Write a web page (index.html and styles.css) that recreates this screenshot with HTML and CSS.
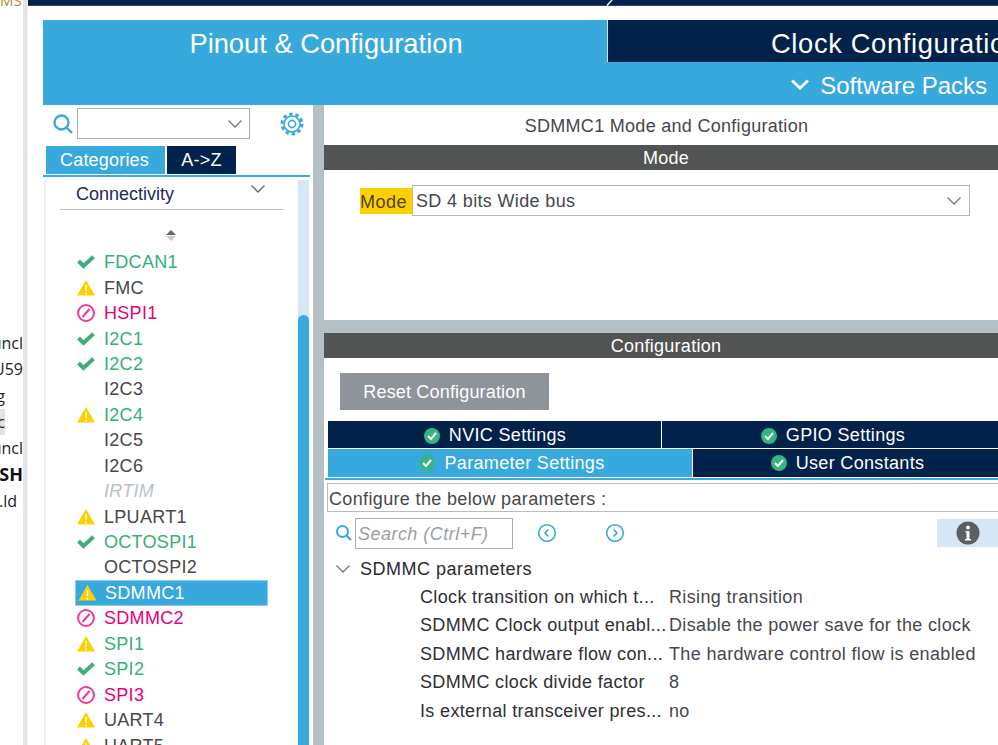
FILE: index.html
```html
<!DOCTYPE html>
<html lang="en">
<head>
<meta charset="utf-8">
<title>Pinout &amp; Configuration</title>
<link rel="stylesheet" href="styles.css">
</head>
<body>
<svg class="defs" width="0" height="0" aria-hidden="true">
  <symbol id="ok" viewBox="0 0 18 14"><path d="M1.500 6 6.500 11 16.500 1.800" fill="none" stroke="#3fae78" stroke-width="3.900"/></symbol>
  <symbol id="warn" viewBox="0 0 18 16"><path d="M9 0 18 15.500H0Z" fill="#ffd000"/><path d="M9 5v6M9 12.400v2" stroke="#fff" stroke-width="1.400"/></symbol>
  <symbol id="ban" viewBox="0 0 18 18"><circle cx="9" cy="9" r="7.900" fill="none" stroke="#ee3a96" stroke-width="2"/><path d="M5.500 13 12.500 5" stroke="#ee3a96" stroke-width="2"/></symbol>
  <symbol id="good" viewBox="0 0 18 18"><circle cx="9" cy="9" r="8" fill="#35b583"/><path d="M5 9l3 3 5-6" fill="none" stroke="#fff" stroke-width="2"/></symbol>
  <symbol id="chev" viewBox="0 0 16 10"><path d="M1.500 1.500 8 8l6.500-6.500" fill="none" stroke="currentColor" stroke-width="1.300"/></symbol>
</svg>
<div class="page">
  <div class="sliver">
    <div class="sl sl-top">MS</div>
    <div class="sl sl-first"><span>Funcl</span></div>
    <div class="sl"><span>U59</span></div>
    <div class="sl sl-g"><span>g</span></div>
    <div class="sl sl-c"><span>c</span></div>
    <div class="sl"><span>Funcl</span></div>
    <div class="sl sl-b"><span>FLASH</span></div>
    <div class="sl sl-ld"><span>.ld</span></div>
  </div>
  <div class="rule"></div>
  <main class="main">
    <div class="topbar"><svg class="topmark" width="7" height="6" viewBox="0 0 7 6"><path d="M6 0 1 5.500" stroke="#fff" stroke-width="1.300"/></svg></div>
    <div class="app">
      <header class="head">
        <div class="head-tabs">
          <div class="htab htab-on">Pinout &amp; Configuration</div>
          <div class="htab htab-off">Clock Configuration</div>
        </div>
        <div class="packs"><svg class="packs-chev" width="20" height="13" viewBox="0 0 20 13"><path d="M2 2.500 10 10l8-7.500" fill="none" stroke="#fff" stroke-width="2.800"/></svg>Software Packs</div>
      </header>
      <div class="work">
        <aside class="left">
          <div class="find">
            <svg class="find-ico" width="22" height="22" viewBox="0 0 22 22"><circle cx="9.500" cy="9.500" r="7" fill="none" stroke="#38a9dc" stroke-width="2.400"/><path d="M14.500 14.500 20 20" stroke="#38a9dc" stroke-width="2.400"/></svg>
            <div class="find-box"><svg class="chev-ico" width="16" height="10"><use href="#chev"/></svg></div>
            <svg class="gear" width="24" height="24" viewBox="0 0 24 24"><g fill="none" stroke="#38a9dc"><circle cx="12" cy="12" r="3.600" stroke-width="1.600"/><circle cx="12" cy="12" r="8" stroke-width="1.600"/><circle cx="12" cy="12" r="10" stroke-width="3" stroke-dasharray="3.400 2.880"/></g></svg>
          </div>
          <div class="ltabs">
            <div class="ltab ltab-on">Categories</div>
            <div class="ltab ltab-off">A-&gt;Z</div>
          </div>
          <div class="blue-line blue-line-l"></div>
          <div class="tree">
            <div class="tree-main">
              <div class="group">Connectivity<svg class="group-chev" width="16" height="10"><use href="#chev"/></svg></div>
              <div class="sort"><i class="sort-up"></i><i class="sort-down"></i></div>
              <ul class="rows">
                <li class="row green"><svg class="ri" width="18" height="14"><use href="#ok"/></svg>FDCAN1</li>
                <li class="row"><svg class="ri" width="18" height="16"><use href="#warn"/></svg>FMC</li>
                <li class="row pink"><svg class="ri" width="18" height="18"><use href="#ban"/></svg>HSPI1</li>
                <li class="row green"><svg class="ri" width="18" height="14"><use href="#ok"/></svg>I2C1</li>
                <li class="row green"><svg class="ri" width="18" height="14"><use href="#ok"/></svg>I2C2</li>
                <li class="row"><span class="ri"></span>I2C3</li>
                <li class="row green"><svg class="ri" width="18" height="16"><use href="#warn"/></svg>I2C4</li>
                <li class="row"><span class="ri"></span>I2C5</li>
                <li class="row"><span class="ri"></span>I2C6</li>
                <li class="row off"><span class="ri"></span>IRTIM</li>
                <li class="row"><svg class="ri" width="18" height="16"><use href="#warn"/></svg>LPUART1</li>
                <li class="row green"><svg class="ri" width="18" height="14"><use href="#ok"/></svg>OCTOSPI1</li>
                <li class="row"><span class="ri"></span>OCTOSPI2</li>
                <li class="row sel"><svg class="ri" width="19" height="16"><use href="#warn"/></svg>SDMMC1</li>
                <li class="row pink"><svg class="ri" width="18" height="18"><use href="#ban"/></svg>SDMMC2</li>
                <li class="row green"><svg class="ri" width="18" height="16"><use href="#warn"/></svg>SPI1</li>
                <li class="row green"><svg class="ri" width="18" height="14"><use href="#ok"/></svg>SPI2</li>
                <li class="row pink"><svg class="ri" width="18" height="18"><use href="#ban"/></svg>SPI3</li>
                <li class="row"><svg class="ri" width="18" height="16"><use href="#warn"/></svg>UART4</li>
                <li class="row"><svg class="ri" width="18" height="16"><use href="#warn"/></svg>UART5</li>
              </ul>
            </div>
            <div class="track"><div class="thumb"></div></div>
          </div>
        </aside>
        <div class="vsplit"></div>
        <section class="right">
          <div class="mode-pane">
            <div class="pane-title">SDMMC1 Mode and Configuration</div>
            <div class="bar">Mode</div>
            <div class="mode-row">
              <div class="mode-label">Mode</div>
              <div class="mode-select">SD 4 bits Wide bus<svg class="chev-ico" width="16" height="10"><use href="#chev"/></svg></div>
            </div>
          </div>
          <div class="hsplit"></div>
          <div class="bar">Configuration</div>
          <div class="reset">Reset Configuration</div>
          <div class="ctabs ctabs-a">
            <div class="ctab"><svg width="18" height="18"><use href="#good"/></svg>NVIC Settings</div>
            <div class="ctab"><svg width="18" height="18"><use href="#good"/></svg>GPIO Settings</div>
          </div>
          <div class="ctabs ctabs-b">
            <div class="ctab ctab-on"><svg width="18" height="18"><use href="#good"/></svg>Parameter Settings</div>
            <div class="ctab"><svg width="18" height="18"><use href="#good"/></svg>User Constants</div>
          </div>
          <div class="blue-line blue-line-r"></div>
          <div class="cfg-note">Configure the below parameters :</div>
          <div class="tools">
            <svg class="tool-find" width="18" height="18" viewBox="0 0 18 18"><circle cx="7.500" cy="7.500" r="5.500" fill="none" stroke="#38a9dc" stroke-width="2"/><path d="M11.500 11.500 16 16" stroke="#38a9dc" stroke-width="2.200"/></svg>
            <div class="tool-input">Search (Ctrl+F)</div>
            <svg class="nav nav-prev" width="20" height="20" viewBox="0 0 20 20"><circle cx="10" cy="10" r="8.300" fill="none" stroke="#38a9dc" stroke-width="1.600"/><path d="M11.500 6.500 8 10l3.500 3.500" fill="none" stroke="#38a9dc" stroke-width="1.600"/></svg>
            <svg class="nav nav-next" width="20" height="20" viewBox="0 0 20 20"><circle cx="10" cy="10" r="8.300" fill="none" stroke="#38a9dc" stroke-width="1.600"/><path d="M8.500 6.500 12 10l-3.500 3.500" fill="none" stroke="#38a9dc" stroke-width="1.600"/></svg>
            <div class="info"><svg width="24" height="24" viewBox="0 0 24 24"><circle cx="12" cy="12" r="11.500" fill="#5c5f62"/><path d="M9.500 10h4v8h1.500v1.500H9v-1.500h1.500v-6.500h-1Z" fill="#fff"/><circle cx="12" cy="6.500" r="2" fill="#fff"/></svg></div>
          </div>
          <div class="params-head"><svg class="params-chev" width="16" height="10"><use href="#chev"/></svg>SDMMC parameters</div>
          <dl class="params">
            <dt>Clock transition on which t...</dt><dd>Rising transition</dd>
            <dt>SDMMC Clock output enabl...</dt><dd>Disable the power save for the clock</dd>
            <dt>SDMMC hardware flow con...</dt><dd>The hardware control flow is enabled</dd>
            <dt>SDMMC clock divide factor</dt><dd>8</dd>
            <dt>Is external transceiver pres...</dt><dd>no</dd>
          </dl>
        </section>
      </div>
    </div>
  </main>
</div>
</body>
</html>
```

FILE: styles.css
```css
* { box-sizing: border-box; }
html, body { margin: 0; padding: 0; height: 100%; overflow: hidden; background: #fff; }
body { font-family: "Liberation Sans", Arial, sans-serif; color: #47474d; }
.defs { position: absolute; }
ul, dl, dd { margin: 0; padding: 0; list-style: none; }

.page { display: flex; width: 998px; height: 745px; overflow: hidden; }

/* cut-off neighbouring window */
.sliver { width: 23px; flex: none; overflow: hidden; font-family: "Open Sans", sans-serif; font-size: 16px; color: #222; }
.sl { height: 26.300px; line-height: 26px; display: flex; justify-content: flex-end; white-space: nowrap; }
.sl span { flex: none; }
.sl-top { height: 8px; line-height: 0; justify-content: flex-start; color: #b98a3a; font-size: 15px; margin-bottom: 322px; }
.sl-g { padding-right: 18px; }
.sl-c { padding-right: 18px; background: linear-gradient(#e2e2e2, #e2e2e2) no-repeat 0 0 / 5px 100%; }
.sl-b { font-weight: 700; color: #111; font-size: 18px; }
.sl-ld { padding-right: 6px; }

.rule { width: 5px; flex: none; background: #e6e6e6; border-right: 1px solid #f2f2f2; }

.main { flex: 1; min-width: 0; display: flex; flex-direction: column; }
.topbar { height: 6px; flex: none; background: #02224b; border-bottom: 1px solid #2b4a6f; display: flex; }
.topmark { margin-left: 578px; flex: none; }
.app { flex: 1; min-height: 0; margin: 14px 0 0 15px; display: flex; flex-direction: column; }

.head { flex: none; background: #38a9dc; color: #fff; }
.head-tabs { display: flex; height: 42px; }
.htab { font-size: 27.300px; line-height: 48px; white-space: nowrap; overflow: hidden; }
.htab-on { width: 564px; padding-left: 2px; text-align: center; }
.htab-off { flex: 1; min-width: 0; background: #02224b; border-left: 1px solid #cfe6f3; padding-left: 163px; letter-spacing: .65px; }
.packs { height: 43px; display: flex; align-items: center; justify-content: flex-end; padding: 4px 11px 0 0; font-size: 24px; }
.packs-chev { margin-right: 10px; margin-top: -2px; }

.work { flex: 1; min-height: 0; display: flex; }

/* left column */
.left { width: 270px; flex: none; display: flex; flex-direction: column; }
.find { height: 41px; flex: none; display: flex; align-items: center; padding: 0 0 4px 9px; }
.find-ico { flex: none; }
.find-box { width: 173px; height: 31px; margin-left: 3px; border: 1px solid #a9adb1; display: flex; align-items: center; justify-content: flex-end; padding-right: 6px; color: #777; }
.gear { margin-left: 30px; flex: none; }
.ltabs { display: flex; height: 28px; flex: none; padding-left: 3px; gap: 2px; font-size: 18px; letter-spacing: .2px; color: #fff; }
.ltab { display: flex; align-items: center; justify-content: center; }
.ltab-on { width: 119px; padding-right: 2px; background: #38a9dc; }
.ltab-off { width: 69px; background: #02224b; }
.blue-line { height: 2px; flex: none; margin-top: 1px; background: #38a9dc; }
.blue-line-l { margin-right: 3px; }
.tree { flex: 1; min-height: 0; display: flex; margin: 3px 4px 0 1px; border-left: 2px solid #efefef; }
.tree-main { flex: 1; min-width: 0; overflow: hidden; }
.group { height: 30px; margin: 0 15px 0 14px; padding-left: 16px; border-bottom: 1px solid #b8bfc6; font-size: 18px; line-height: 29px; color: #1e2a5e; display: flex; justify-content: space-between; }
.group-chev { color: #666; margin: 4px 17px 0 0; flex: none; }
.sort { height: 39.500px; display: flex; flex-direction: column; align-items: center; padding: 20px 0 0 0; gap: 1px; width: 250px; }
.sort i { display: block; width: 0; height: 0; border-left: 5.500px solid transparent; border-right: 5.500px solid transparent; }
.sort-up { border-bottom: 5px solid #666; }
.sort-down { border-top: 5px solid #c9c9c9; }
.rows { margin-left: 29px; width: 193px; }
.row { height: 25.450px; padding-top: 1px; display: flex; align-items: center; font-size: 18px; white-space: nowrap; letter-spacing: .3px; color: #47474d; }
.ri { width: 18px; flex: none; margin: -1px 9px 0 2px; }
.green { color: #35b075; }
.pink { color: #e6007e; }
.off { color: #b9c0c8; font-style: italic; }
.sel { background: #38a9dc; color: #fff; border: 1px solid #8fcdea; }
.sel .ri { width: 19px; margin: -1px 8px 0 2px; }
.track { width: 11px; flex: none; background: #d6e6f4; padding-top: 135px; }
.thumb { height: 100%; background: #38a9dc; border-radius: 6px 6px 0 0; }

.vsplit { width: 11px; flex: none; background: #b5bfc6; }

/* right column */
.right { flex: 1; min-width: 0; display: flex; flex-direction: column; }
.mode-pane { height: 215px; flex: none; }
.pane-title { height: 40px; line-height: 42px; padding-left: 11px; text-align: center; font-size: 18px; letter-spacing: .29px; }
.bar { height: 25px; flex: none; line-height: 26px; padding-left: 10px; text-align: center; background: #525453; color: #fff; font-size: 18px; letter-spacing: .25px; }
.mode-row { display: flex; align-items: center; margin: 15px 28px 0 36px; }
.mode-label { width: 52px; height: 26px; background: #ffd000; color: #4d4420; font-size: 18px; letter-spacing: .5px; line-height: 28px; }
.mode-select { flex: 1; height: 31px; border: 1px solid #b5b8bb; padding: 1px 7px 0 3px; display: flex; align-items: center; justify-content: space-between; font-size: 18px; letter-spacing: .35px; }
.chev-ico { color: #777; flex: none; }
.hsplit { height: 13px; flex: none; background: #b5bfc6; }
.reset { width: 209px; height: 37px; flex: none; margin: 15px 0 0 16px; background: #8e9499; color: #fff; font-size: 18px; letter-spacing: .17px; line-height: 39px; text-align: center; }
.ctabs { flex: none; display: flex; color: #fff; font-size: 18px; letter-spacing: .33px; margin-left: 4px; }
.ctabs-a { height: 27px; margin-top: 11px; gap: 1px; }
.ctabs-a .ctab { padding-top: 2px; }
.ctabs-b { height: 28px; margin-top: 1px; gap: 1px; }
.ctab { background: #02224b; display: flex; align-items: center; justify-content: center; gap: 8px; white-space: nowrap; }
.ctabs-a .ctab:first-child { width: 333px; }
.ctabs-a .ctab:last-child { flex: 1; padding-left: 5px; }
.ctabs-b .ctab:first-child { width: 364px; padding-left: 3px; }
.ctabs-b .ctab:last-child { flex: 1; padding-left: 3px; }
.ctab-on { background: #38a9dc; }
.blue-line-r { margin: 1px 0 0 1px; }
.cfg-note { height: 29px; flex: none; margin: 3px 0 0 3px; padding-left: 1px; border: 1px solid #b9bcbf; border-right: 0; font-size: 18px; letter-spacing: .35px; line-height: 30px; }
.tools { height: 32px; flex: none; margin-top: 5px; display: flex; align-items: center; padding-left: 11px; }
.tool-find { flex: none; }
.tool-input { width: 158px; height: 31px; margin-left: 2px; border: 1px solid #a9adb1; padding-left: 2px; font-size: 18px; letter-spacing: .47px; line-height: 30px; font-style: italic; color: #9a9ea3; white-space: nowrap; overflow: hidden; }
.nav { flex: none; }
.nav-prev { margin-left: 24px; }
.nav-next { margin-left: 48px; }
.info { margin-left: auto; width: 61px; height: 28px; background: #d6e6f4; display: flex; align-items: center; justify-content: center; }
.params-head { height: 28px; flex: none; margin-top: 6px; padding-left: 11px; display: flex; align-items: center; font-size: 18px; letter-spacing: .5px; color: #2b2b30; }
.params-chev { color: #777; margin-right: 9px; flex: none; }
.params { display: grid; grid-template-columns: 249px 1fr; grid-auto-rows: 28.400px; padding-left: 96px; font-size: 18px; letter-spacing: .35px; line-height: 29px; white-space: nowrap; }
.params dt { color: #2f2f34; }
```
